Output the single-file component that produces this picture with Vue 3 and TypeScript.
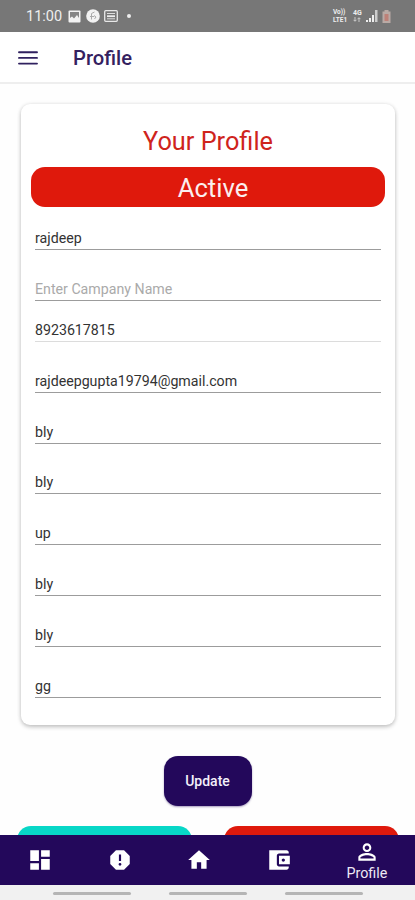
<script setup lang="ts">
interface Field {
  value: string
  placeholder?: string
  locked?: boolean
}

const fields: Field[] = [
  { value: 'rajdeep' },
  { value: '', placeholder: 'Enter Campany Name' },
  { value: '8923617815', locked: true },
  { value: 'rajdeepgupta19794@gmail.com' },
  { value: 'bly' },
  { value: 'bly' },
  { value: 'up' },
  { value: 'bly' },
  { value: 'bly' },
  { value: 'gg' },
]

const tabs: { name: string; path: string }[] = [
  { name: 'dashboard', path: 'M3 13h8V3H3v10zm0 8h8v-6H3v6zm10 0h8V11h-8v10zm0-18v6h8V3h-8z' },
  {
    name: 'report',
    path: 'M15.73 3H8.27L3 8.27v7.46L8.27 21h7.46L21 15.73V8.27L15.73 3zM12 17.3c-.72 0-1.3-.58-1.3-1.3s.58-1.3 1.3-1.3 1.3.58 1.3 1.3-.58 1.3-1.3 1.3zm1-4.3h-2V7h2v6z',
  },
  { name: 'home', path: 'M10 20v-6h4v6h5v-8h3L12 3 2 12h3v8z' },
  {
    name: 'wallet',
    path: 'M21 18v1c0 1.1-.9 2-2 2H3V3h16c1.1 0 2 .9 2 2v1h-9c-1.1 0-2 .9-2 2v8c0 1.1.9 2 2 2h9zm-9-2h10V8H12v8zm4-2.500c-.83 0-1.500-.67-1.500-1.500s.67-1.500 1.500-1.500 1.500.67 1.500 1.500-.67 1.500-1.500 1.500z',
  },
]
</script>

<template>
  <div class="screen">
    <header class="status">
      <span class="clock">11:00</span>
      <svg class="s-icon" width="13" height="13" viewBox="0 0 13 13">
        <rect x=".5" y=".5" width="12" height="12" rx="1" fill="#f2f2f2" />
        <path d="M2 2h9v6L9 5 6 8.500 4 6.500 2 8z" fill="#858585" />
      </svg>
      <svg class="s-icon round" width="14" height="14" viewBox="0 0 14 14">
        <circle cx="7" cy="7" r="6.800" fill="#f2f2f2" />
        <path d="M8.500 3 5.500 4.500v6M4 7.500h4M8 6.500l2 1.500-1.500 2" fill="none" stroke="#aaa" />
      </svg>
      <svg class="s-icon" width="14" height="12" viewBox="0 0 14 12">
        <rect x=".7" y=".7" width="12.600" height="10.600" rx="1" fill="none" stroke="#e8e8e8" stroke-width="1.300" />
        <path d="M3 3.500h8M3 8.800h8" stroke="#ddd" />
        <path d="M3 6.200h8" stroke="#eee" stroke-width="1.800" />
      </svg>
      <i class="dot"></i>
      <div class="signals">
        <div class="lte"><span>Vo))</span><span>LTE1</span></div>
        <div class="net"><span>4G</span>
          <svg width="8" height="5" viewBox="0 0 8 5"><path d="M2 0v4M.5 2.800 2 4.300l1.500-1.500M6 5V1M4.500 2.200 6 .7l1.500 1.500" fill="none" stroke="#ddd" stroke-width=".8" /></svg>
        </div>
        <svg class="bars" width="12" height="12" viewBox="0 0 12 12" fill="#eee">
          <path d="M0 10h2v2H0zM3 8h2v4H3zM6 5h2v7H6z" /><path d="M9 0h2.500v12H9z" fill="#ccc" />
        </svg>
        <svg class="battery" width="9" height="13" viewBox="0 0 9 13">
          <path d="M2.500 0h4v1.500H8.500V13H.5V1.500h2z" fill="#b9aaa5" />
          <path d="M2.500 4h4v7h-4z" fill="#bd8178" />
        </svg>
      </div>
    </header>

    <div class="appbar">
      <svg width="20" height="14" viewBox="0 0 20 14"><path d="M1 1.200h18M1 6.900h18M1 12.600h18" stroke="#30215f" stroke-width="1.900" stroke-linecap="round" /></svg>
      <h1>Profile</h1>
    </div>

    <main>
      <section class="card">
        <h2>Your Profile</h2>
        <div class="banner">Active</div>
        <div v-for="(f, i) in fields" :key="i" class="field" :class="{ locked: f.locked, empty: !f.value }">
          {{ f.value || f.placeholder }}
        </div>
      </section>
      <button class="update">Update</button>
      <div class="actions"><div class="teal"></div><div class="red"></div></div>
    </main>

    <nav>
      <div v-for="t in tabs" :key="t.name" class="tab">
        <svg width="26" height="26" viewBox="0 0 24 24"><path :d="t.path" fill="#fff" /></svg>
      </div>
      <div class="tab current">
        <svg width="26" height="26" viewBox="0 0 24 24">
          <path fill="#fff" d="M12 5.900c1.160 0 2.100.94 2.100 2.100s-.94 2.100-2.100 2.100S9.900 9.160 9.900 8s.94-2.100 2.100-2.100m0 9c2.970 0 6.100 1.460 6.100 2.100v1.100H5.900V17c0-.64 3.130-2.100 6.100-2.100M12 4C9.790 4 8 5.790 8 8s1.790 4 4 4 4-1.790 4-4-1.790-4-4-4zm0 9c-2.670 0-8 1.340-8 4v3h16v-3c0-2.660-5.330-4-8-4z" />
        </svg>
        <span>Profile</span>
      </div>
    </nav>
    <footer><i></i><i></i><i></i></footer>
  </div>
</template>

<style>
body { margin: 0; background: #fff; }
</style>

<style scoped>
.screen {
  width: 415px;
  height: 900px;
  overflow: hidden;
  display: flex;
  flex-direction: column;
  background: #fefefe;
  font-family: Roboto, "Liberation Sans", sans-serif;
}
svg { display: block; flex: none; }
.status {
  height: 32px;
  flex: none;
  box-sizing: border-box;
  background: #777;
  color: #eee;
  display: flex;
  align-items: center;
  padding: 0 24px 0 26px;
}
.clock { font-size: 14.5px; width: 42px; line-height: 32px; padding-top: 1px; }
.s-icon { margin-right: 5px; }
.s-icon.round { margin-right: 4px; }
.dot { width: 4px; height: 4px; border-radius: 2px; background: #eee; margin-left: 4px; }
.signals { margin-left: auto; display: flex; align-items: center; }
.lte { width: 20px; font-size: 6.5px; font-weight: 700; line-height: 8px; display: flex; flex-direction: column; }
.net { width: 13px; font-size: 7px; font-weight: 700; line-height: 7px; }
.net span { display: block; }
.bars { margin-right: 4px; }
.appbar {
  height: 52px;
  flex: none;
  box-sizing: border-box;
  background: #fff;
  border-bottom: 2px solid #eee;
  display: flex;
  align-items: center;
  padding: 1px 0 0 18px;
}
h1 { margin: 0 0 0 35px; font-size: 20.2px; font-weight: 500; color: #34215f; line-height: 28px; padding-top: 1px; }
main { flex: 1; min-height: 0; overflow: hidden; display: flex; flex-direction: column; align-items: center; }
.card {
  width: 374px;
  height: 621px;
  flex: none;
  box-sizing: border-box;
  margin: 20px 0 0 1px;
  padding: 20px 10px 0;
  border-radius: 9px;
  background: #fff;
  box-shadow: 0 2px 4px rgba(0, 0, 0, .22), 0 0 4px rgba(0, 0, 0, .08);
}
h2 { margin: 0; font-size: 25.3px; line-height: 36px; font-weight: 400; text-align: center; color: #cf241c; }
.banner {
  height: 40px;
  margin: 7px 0 2px;
  border-radius: 14px;
  background: #df190c;
  color: #fbeeee;
  font-size: 25.6px;
  line-height: 42px;
  padding-left: 10px;
  text-align: center;
}
.field {
  height: 50.85px;
  box-sizing: border-box;
  margin: 0 4px;
  padding-bottom: 1px;
  border-bottom: 1.5px solid #9c9c9c;
  display: flex;
  align-items: flex-end;
  font-size: 14.2px;
  line-height: 19px;
  color: #333;
}
.banner + .field { height: 41px; }
.field.locked { height: 41px; border-bottom-color: #dcdcdc; }
.field.empty { color: #aaa; }
.update {
  flex: none;
  width: 88px;
  height: 50px;
  margin-top: 31px;
  border: 0;
  border-radius: 14px;
  background: #23085b;
  color: #f4f0fa;
  font: 500 14px/18px Roboto, "Liberation Sans", sans-serif;
  padding: 0;
  box-shadow: 0 1px 2px rgba(35, 8, 91, .4);
}
.actions { display: flex; gap: 32px; margin: 20px 0 0 1px; flex: none; }
.actions div { width: 175px; height: 50px; border-radius: 14px; }
.teal { background: #08d7c7; }
.red { background: #df190c; }
nav { height: 50px; flex: none; background: #23085b; display: flex; color: #fff; }
.tab { width: 79.7px; display: flex; flex-direction: column; align-items: center; justify-content: center; }
.tab.current { flex: 1; justify-content: flex-start; padding-top: 4px; }
.tab.current span { font-size: 14.3px; line-height: 17px; color: #eee9f5; }
footer {
  height: 15px;
  flex: none;
  box-sizing: border-box;
  background: #f1f1f1;
  display: flex;
  gap: 38.5px;
  padding: 7px 0 0 53px;
}
footer i { width: 77.5px; height: 3px; border-radius: 1.5px; background: #b5b5b5; }
</style>
